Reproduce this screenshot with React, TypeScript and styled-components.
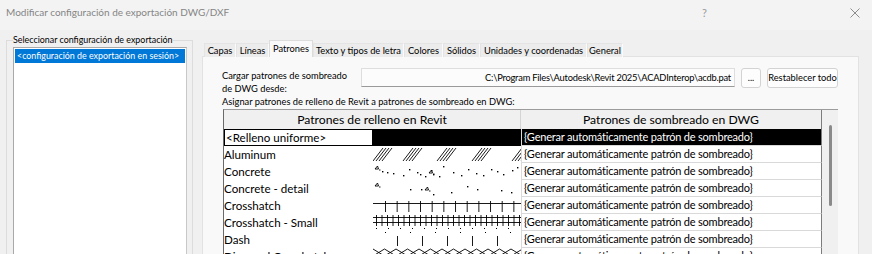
import styled, { createGlobalStyle } from 'styled-components'

const GlobalStyle = createGlobalStyle`
  html, body {
    margin: 0;
    padding: 0;
    background: #f0f0f0;
  }
  body {
    font-family: Lato, "Noto Sans", sans-serif;
    font-size: 9.3px;
    color: #000;
  }
  #root {
    width: 872px;
    height: 254px;
    overflow: hidden;
  }
`

type PatternKind = 'solid' | 'aluminum' | 'concrete' | 'concreteDetail' | 'crosshatch' | 'crosshatchSmall' | 'dash' | 'diamond'

const rows: { name: string; pattern: PatternKind }[] = [
  { name: '<Relleno uniforme>', pattern: 'solid' },
  { name: 'Aluminum', pattern: 'aluminum' },
  { name: 'Concrete', pattern: 'concrete' },
  { name: 'Concrete - detail', pattern: 'concreteDetail' },
  { name: 'Crosshatch', pattern: 'crosshatch' },
  { name: 'Crosshatch - Small', pattern: 'crosshatchSmall' },
  { name: 'Dash', pattern: 'dash' },
  { name: 'Diamond Crosshatch', pattern: 'diamond' },
]

const tabs = [
  { label: 'Capas', w: 32 },
  { label: 'Líneas', w: 33 },
  { label: 'Patrones', w: 44, active: true },
  { label: 'Texto y tipos de letra', w: 91 },
  { label: 'Colores', w: 39 },
  { label: 'Sólidos', w: 37 },
  { label: 'Unidades y coordenadas', w: 107 },
  { label: 'General', w: 36 },
]

const concreteDots = [
  [9, 8], [14, 9], [20, 10], [30, 12], [36, 6], [44, 9], [47, 11], [52, 13],
  [58, 7], [60, 11], [66, 13], [70, 3], [80, 9], [88, 12], [95, 6], [103, 10], [110, 12],
  [118, 6], [124, 8], [130, 11], [139, 7], [144, 4],
]
const detailDots = [
  [37, 9], [48, 9], [60, 14], [78, 12], [94, 6], [104, 9], [128, 10], [138, 12],
]

const Pattern = ({ kind }: { kind: PatternKind }) => {
  if (kind === 'solid') return null
  let body: React.ReactNode = null
  if (kind === 'aluminum') {
    const groups = [0, 30, 64, 99, 139]
    body = groups.flatMap((g) =>
      [0, 1, 2, 3].map((i) => (
        <line key={`${g}-${i}`} x1={g + i * 3} y1={15} x2={g + i * 3 + 10} y2={2} />
      ))
    )
  } else if (kind === 'concrete' || kind === 'concreteDetail') {
    const dots = kind === 'concrete' ? concreteDots : detailDots
    const tris = kind === 'concrete' ? [[2, 6], [56, 10]] : [[2, 6], [52, 10]]
    body = (
      <>
        {dots.map(([x, y], i) => (
          <rect key={i} x={x} y={y} width={1.4} height={1.4} stroke="none" fill="#000" />
        ))}
        {tris.map(([x, y]) => (
          <path key={`t${x}`} d={`M${x} ${y} l2.5 -3 l1 3 z M${x + 4} ${y + 1} h1.5`} fill="none" />
        ))}
      </>
    )
  } else if (kind === 'crosshatch') {
    body = (
      <>
        <line x1={0} y1={6.5} x2={148} y2={6.5} />
        {Array.from({ length: 12 }).map((_, i) => (
          <line key={i} x1={12.5 + i * 11.67} y1={4} x2={12.5 + i * 11.67} y2={15} />
        ))}
      </>
    )
  } else if (kind === 'crosshatchSmall') {
    body = (
      <>
        <line x1={0} y1={3.5} x2={148} y2={3.5} />
        <line x1={0} y1={8.5} x2={148} y2={8.5} />
        {Array.from({ length: 27 }).map((_, i) => (
          <line key={i} x1={3.5 + i * 5.5} y1={1} x2={3.5 + i * 5.5} y2={12} />
        ))}
        {Array.from({ length: 12 }).map((_, i) => (
          <rect key={`d${i}`} x={3 + i * 12} y={14} width={1} height={1} stroke="none" fill="#000" />
        ))}
      </>
    )
  } else if (kind === 'dash') {
    body = (
      <>
        {[24, 49, 74, 99, 124].map((x) => (
          <line key={x} x1={x + 0.5} y1={5} x2={x + 0.5} y2={15} />
        ))}
        {[12, 37, 62, 87, 112, 137].map((x) => (
          <rect key={`d${x}`} x={x} y={1} width={1} height={1} stroke="none" fill="#000" />
        ))}
      </>
    )
  } else if (kind === 'diamond') {
    const down = Array.from({ length: 14 }).map((_, i) => `${i * 11.5},${i % 2 ? 8 : 1}`).join(' ')
    const up = Array.from({ length: 14 }).map((_, i) => `${i * 11.5},${i % 2 ? 1 : 8}`).join(' ')
    body = (
      <>
        <polyline points={down} fill="none" />
        <polyline points={up} fill="none" />
      </>
    )
  }
  return (
    <svg width={148} height={17} viewBox="0 0 148 17" stroke="#000" strokeWidth={0.9}>
      {body}
    </svg>
  )
}

const App = () => {
  return (
    <Window>
      <GlobalStyle />
      <TitleBar>
        <Title>Modificar configuración de exportación DWG/DXF</Title>
        <TitleButtons>
          <Help>?</Help>
          <svg width={10} height={10} viewBox="0 0 10 10" stroke="#8c8c8c" strokeWidth={1}>
            <line x1={0.5} y1={0.5} x2={9.5} y2={9.5} />
            <line x1={9.5} y1={0.5} x2={0.5} y2={9.5} />
          </svg>
        </TitleButtons>
      </TitleBar>
      <Body>
        <Group>
          <Legend>Seleccionar configuración de exportación</Legend>
          <ListBox>
            <ListItem $selected>&lt;configuración de exportación en sesión&gt;</ListItem>
          </ListBox>
        </Group>
        <TabArea>
          <TabStrip>
            {tabs.map((t) => (
              <Tab key={t.label} $w={t.w} $active={!!t.active}>
                {t.label}
              </Tab>
            ))}
          </TabStrip>
          <Panel>
            <LoadRow>
              <LoadLabel>
                Cargar patrones de sombreado
                <br />
                de DWG desde:
              </LoadLabel>
              <PathBox>C:\Program Files\Autodesk\Revit 2025\ACADInterop\acdb.pat</PathBox>
              <Button $w={20}>...</Button>
              <Button $w={71}>Restablecer todo</Button>
            </LoadRow>
            <Hint>Asignar patrones de relleno de Revit a patrones de sombreado en DWG:</Hint>
            <Table>
              <Grid>
                <HeaderRow>
                  <HeaderCell>Patrones de relleno en Revit</HeaderCell>
                  <HeaderCell $last>Patrones de sombreado en DWG</HeaderCell>
                </HeaderRow>
                {rows.map((r, i) => (
                  <Row key={r.name}>
                    <NameCell>
                      <NameText $selected={i === 0}>{r.name}</NameText>
                      <PatternCell $selected={i === 0}>
                        <Pattern kind={r.pattern} />
                      </PatternCell>
                    </NameCell>
                    <DwgCell $selected={i === 0}>{'{Generar automáticamente patrón de sombreado}'}</DwgCell>
                  </Row>
                ))}
              </Grid>
              <ScrollTrack>
                <Thumb />
              </ScrollTrack>
            </Table>
          </Panel>
        </TabArea>
      </Body>
    </Window>
  )
}

const Window = styled.div`
  width: 872px;
  height: 254px;
  display: flex;
  flex-direction: column;
  background: #f0f0f0;
  overflow: hidden;
`
const TitleBar = styled.div`
  height: 30px;
  flex: none;
  display: flex;
  justify-content: space-between;
  align-items: flex-start;
  padding: 4px 0 0 6px;
  box-sizing: border-box;
  background: #f3f3f3;
`
const Title = styled.div`
  font-size: 10px;
  line-height: 16px;
  color: #858585;
`
const TitleButtons = styled.div`
  display: flex;
  align-items: center;
  gap: 143px;
  padding: 3px 12px 0 0;
`
const Help = styled.span`
  font-size: 11px;
  line-height: 12px;
  color: #9a9a9a;
`
const Body = styled.div`
  flex: 1;
  min-height: 0;
  display: flex;
  align-items: flex-start;
  padding-left: 6px;
`
const Group = styled.fieldset`
  width: 187px;
  height: 260px;
  box-sizing: border-box;
  margin: 3px 0 0;
  padding: 0 5px 0 6px;
  border: 1px solid #dcdcdc;
  min-width: 0;
  font-size: 8.9px;
`
const Legend = styled.legend`
  padding: 0;
  line-height: 14px;
  white-space: nowrap;
`
const ListBox = styled.div`
  width: 174px;
  height: 220px;
  box-sizing: border-box;
  background: #fff;
  border: 1px solid #a9a9a9;
  border-right-color: #c8c8c8;
  padding: 1px;
`
const ListItem = styled.div<{ $selected?: boolean }>`
  height: 14px;
  line-height: 14px;
  padding-left: 2px;
  white-space: nowrap;
  overflow: hidden;
  background: ${(p) => (p.$selected ? '#0078d7' : 'transparent')};
  color: ${(p) => (p.$selected ? '#fff' : '#000')};
`
const TabArea = styled.div`
  margin: 10px 0 0 9px;
  width: 657px;
  height: 230px;
  display: flex;
  flex-direction: column;
`
const TabStrip = styled.div`
  display: flex;
  align-items: flex-end;
  height: 16px;
  padding-left: 2px;
`
const Tab = styled.div<{ $w: number; $active: boolean }>`
  width: ${(p) => p.$w}px;
  height: ${(p) => (p.$active ? 17 : 14)}px;
  line-height: ${(p) => (p.$active ? 15 : 13)}px;
  box-sizing: border-box;
  text-align: center;
  white-space: nowrap;
  background: ${(p) => (p.$active ? '#f9f9f9' : '#ececec')};
  border: 1px solid ${(p) => (p.$active ? '#dcdcdc' : '#e4e4e4')};
  border-bottom: none;
  border-right-color: ${(p) => (p.$active ? '#dcdcdc' : '#fafafa')};
  margin-bottom: -1px;
  position: relative;
  z-index: ${(p) => (p.$active ? 1 : 0)};
`
const Panel = styled.div`
  flex: 1;
  background: #f9f9f9;
  border: 1px solid #e2e2e2;
  padding: 11px 0 0 19px;
  display: flex;
  flex-direction: column;
`
const LoadRow = styled.div`
  display: flex;
  align-items: flex-start;
`
const LoadLabel = styled.div`
  width: 139px;
  margin-top: 1px;
  line-height: 13px;
  white-space: nowrap;
`
const PathBox = styled.div`
  width: 374px;
  height: 19px;
  box-sizing: border-box;
  border: 1px solid #dedede;
  border-bottom-color: #9a9a9a;
  background: #fcfcfc;
  text-align: right;
  padding-right: 3px;
  line-height: 17px;
  letter-spacing: -0.2px;
  white-space: nowrap;
`
const Button = styled.div<{ $w: number }>`
  width: ${(p) => p.$w}px;
  height: 20px;
  margin-left: 6px;
  box-sizing: border-box;
  border: 1px solid #d3d3d3;
  border-radius: 3px;
  background: #fdfdfd;
  text-align: center;
  line-height: 18px;
  white-space: nowrap;
`
const Hint = styled.div`
  line-height: 13px;
  white-space: nowrap;
`
const Table = styled.div`
  margin: 1px 0 0 1px;
  width: 615px;
  height: 200px;
  display: flex;
  border-top: 1px solid #9c9c9c;
  border-left: 1px solid #6a6a6a;
  box-sizing: border-box;
  font-size: 11.6px;
`
const Grid = styled.div`
  width: 598px;
  display: flex;
  flex-direction: column;
  background: #fff;
`
const HeaderRow = styled.div`
  display: grid;
  grid-template-columns: 297px 301px;
  height: 19px;
`
const HeaderCell = styled.div<{ $last?: boolean }>`
  background: #f0f0f0;
  text-align: center;
  font-size: 12.2px;
  line-height: 19px;
  border-right: 1px solid ${(p) => (p.$last ? '#7c7c7c' : '#d4d4d4')};
`
const Row = styled.div`
  display: grid;
  grid-template-columns: 297px 301px;
  height: 17px;
`
const NameCell = styled.div`
  display: flex;
`
const NameText = styled.div<{ $selected: boolean }>`
  width: 149px;
  box-sizing: border-box;
  line-height: ${(p) => (p.$selected ? 15 : 17)}px;
  padding-left: ${(p) => (p.$selected ? 1 : 0)}px;
  border: ${(p) => (p.$selected ? '1px solid #000' : 'none')};
  background: #fff;
  white-space: nowrap;
`
const PatternCell = styled.div<{ $selected: boolean }>`
  width: 148px;
  height: 17px;
  overflow: hidden;
  background: ${(p) => (p.$selected ? '#000' : '#fff')};
  svg {
    display: block;
  }
`
const DwgCell = styled.div<{ $selected: boolean }>`
  box-sizing: border-box;
  border-left: 1px solid #dadada;
  border-bottom: 1px solid #d9d9d9;
  border-right: 1px solid #7c7c7c;
  padding-left: 2px;
  font-size: 11px;
  line-height: 16px;
  letter-spacing: -0.2px;
  white-space: nowrap;
  background: ${(p) => (p.$selected ? '#000' : '#fff')};
  color: ${(p) => (p.$selected ? '#fff' : '#000')};
`
const ScrollTrack = styled.div`
  width: 16px;
  background: #f0f0f0;
  padding-top: 15px;
  box-sizing: border-box;
`
const Thumb = styled.div`
  width: 3px;
  height: 81px;
  margin-left: 7px;
  border-radius: 2px;
  background: #8a8a8a;
`

export default App
